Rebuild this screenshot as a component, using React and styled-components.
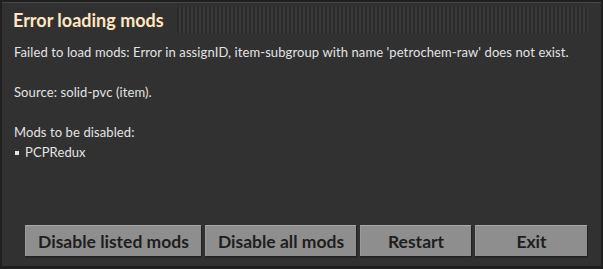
import styled, { createGlobalStyle } from "styled-components";

const GlobalStyle = createGlobalStyle`
  html, body {
    margin: 0;
    padding: 0;
    background: #1e1e1e;
  }
  *, *:before, *:after {
    box-sizing: border-box;
  }
`;

const Frame = styled.div`
  width: 603px;
  height: 269px;
  background: #1f1f1f;
  padding: 2px 2px 3px 2px;
`;

const Window = styled.div`
  height: 100%;
  background: #313131;
  border-top: 1px solid #474747;
  display: flex;
  flex-direction: column;
  padding: 4px 13px 0 11px;
  font-family: Lato, "Open Sans", sans-serif;
`;

const TitleBar = styled.header`
  display: flex;
  align-items: center;
  height: 26px;
  gap: 13px;
`;

const Title = styled.h1`
  margin: 0;
  font-size: 18px;
  font-weight: 700;
  color: #ffe6c0;
  white-space: nowrap;
`;

const Stripes = styled.div`
  flex: 1;
  height: 26px;
  background: repeating-linear-gradient(
    to right,
    #2b2b2b 0 2px,
    #3a3a3a 2px 4px
  );
`;

const Body = styled.div`
  padding: 9px 0 0 1px;
  color: #e3e3e3;
  font-size: 13px;
  letter-spacing: 0.1px;
  line-height: 20px;
  flex: 1;
`;

const Line = styled.p`
  margin: 0;
  min-height: 20px;
  white-space: nowrap;
`;

const Bullet = styled.span`
  display: inline-block;
  width: 4px;
  height: 4px;
  background: #e3e3e3;
  margin: 0 6px 2px 1px;
  vertical-align: middle;
`;

const Buttons = styled.footer`
  display: flex;
  gap: 4px;
  padding: 0 0 10px 12px;
`;

const Button = styled.button`
  width: ${(p) => p.w}px;
  height: 31px;
  background: #8e8e8e;
  border: none;
  border-top: 1px solid #a8a8a8;
  border-left: 1px solid #9a9a9a;
  box-shadow: 1px 1px 0 #222, 0 2px 0 #262626;
  color: #1e1e1e;
  font-family: Lato, "Open Sans", sans-serif;
  font-weight: 700;
  font-size: 17.5px;
  padding: 0;
`;

export default function App() {
  return (
    <Frame>
      <GlobalStyle />
      <Window>
        <TitleBar>
          <Title>Error loading mods</Title>
          <Stripes />
        </TitleBar>
        <Body>
          <Line>
            Failed to load mods: Error in assignID, item-subgroup with name
            'petrochem-raw' does not exist.
          </Line>
          <Line />
          <Line>Source: solid-pvc (item).</Line>
          <Line />
          <Line>Mods to be disabled:</Line>
          <Line>
            <Bullet />
            PCPRedux
          </Line>
        </Body>
        <Buttons>
          <Button w={176}>Disable listed mods</Button>
          <Button w={151}>Disable all mods</Button>
          <Button w={111}>Restart</Button>
          <Button w={112}>Exit</Button>
        </Buttons>
      </Window>
    </Frame>
  );
}
